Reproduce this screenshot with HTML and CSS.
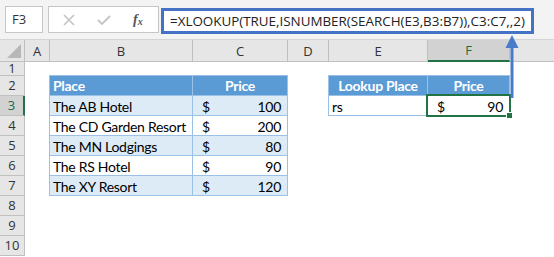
FILE: index.html
```html
<!DOCTYPE html>
<html>
<head>
<meta charset="utf-8">
<link rel="stylesheet" href="styles.css">
</head>
<body>
<div class="app">
  <div class="toolbar">
    <div class="namebox">F3</div>
    <div class="fxbox">
      <svg class="ic" width="14" height="12" viewBox="0 0 14 12"><path d="M2 1 L12 11 M12 1 L2 11" stroke="#c4c4c4" stroke-width="1.6" fill="none"/></svg>
      <svg class="ic" width="14" height="12" viewBox="0 0 14 12"><path d="M1 6 L5 10 L13 2" stroke="#c4c4c4" stroke-width="1.8" fill="none"/></svg>
      <span class="fx">f<sub>x</sub></span>
    </div>
    <div class="formula">=XLOOKUP(TRUE,ISNUMBER(SEARCH(E3,B3:B7)),C3:C7,,2)</div>
  </div>
  <div class="sheet">
    <div class="corner"><span class="tri"></span></div>
    <div class="ch">A</div>
    <div class="ch">B</div>
    <div class="ch">C</div>
    <div class="ch">D</div>
    <div class="ch">E</div>
    <div class="ch sel">F</div>
    <div class="ch last"></div>

    <div class="rh r1">1</div>
    <div class="rh">2</div>
    <div class="rh sel">3</div>
    <div class="rh">4</div>
    <div class="rh">5</div>
    <div class="rh">6</div>
    <div class="rh">7</div>
    <div class="rh">8</div>
    <div class="rh">9</div>
    <div class="rh">10</div>

    <div class="tbl main">
      <div class="th left">Place</div><div class="th">Price</div>
      <div class="td b">The AB Hotel</div><div class="td b num"><span>$</span><span>100</span></div>
      <div class="td">The CD Garden Resort</div><div class="td num"><span>$</span><span>200</span></div>
      <div class="td b">The MN Lodgings</div><div class="td b num"><span>$</span><span>80</span></div>
      <div class="td">The RS Hotel</div><div class="td num"><span>$</span><span>90</span></div>
      <div class="td b">The XY Resort</div><div class="td b num"><span>$</span><span>120</span></div>
    </div>

    <div class="tbl lookup">
      <div class="th">Lookup Place</div><div class="th">Price</div>
      <div class="td w">rs</div><div class="td w num active"><span>$</span><span>90</span><i class="handle"></i></div>
    </div>
  </div>
  <svg class="arrow" width="20" height="70" viewBox="0 0 20 70">
    <path d="M8.5 12 V63 H11.5 V12 Z" fill="#4a7bcb"/>
    <path d="M10 0 L16.5 13 L3.5 13 Z" fill="#4a7bcb"/>
  </svg>
</div>
</body>
</html>
```

FILE: styles.css
```css
* { box-sizing: border-box; }
html, body { margin: 0; padding: 0; background: #fff; }
.app { position: relative; width: 554px; height: 257px; overflow: hidden; font-family: "Open Sans", "Noto Sans", sans-serif; }

.toolbar { height: 40px; background: #f3f3f3; display: flex; align-items: flex-start; padding-top: 6px; padding-left: 5px; border-bottom: 1px solid #d4d4d4; }
.namebox { width: 38px; height: 27px; background: #fff; border: 1px solid #c6c6c6; font-size: 13px; color: #333; padding-left: 6px; line-height: 25px; }
.fxbox { margin-left: 5px; width: 111px; height: 27px; background: #fff; border: 1px solid #c6c6c6; display: flex; align-items: center; padding-left: 13px; }
.fxbox .ic { margin-right: 21px; }
.fxbox .ic + .ic { margin-right: 22px; }
.fx { font-family: "Liberation Serif", serif; font-style: italic; font-size: 14px; color: #555; font-weight: bold; }
.fx sub { font-size: 10px; vertical-align: -1px; }
.formula { margin-left: 2px; margin-top: 2px; width: 373px; height: 26px; background: #fff; border: 3px solid #4472c4; font-size: 13.4px; line-height: 20px; color: #222; padding-left: 6px; white-space: nowrap; overflow: hidden; }

.sheet { display: grid; grid-template-columns: 25px 25px 143px 95px 41px 99px 82px 1fr; grid-template-rows: 22px 14px repeat(9, 20px) 1fr; height: 217px; }
.corner { grid-row: 1; grid-column: 1; background: #e6e6e6; border-right: 1px solid #c0c0c0; border-bottom: 1px solid #c0c0c0; position: relative; }
.tri { position: absolute; right: 3px; bottom: 3px; width: 0; height: 0; border-left: 14px solid transparent; border-bottom: 14px solid #b7b7b7; }
.ch { grid-row: 1; background: #e6e6e6; border-right: 1px solid #c0c0c0; border-bottom: 1px solid #c0c0c0; font-size: 13px; color: #333; display: flex; align-items: center; justify-content: center; }
.ch.last { border-right: none; }
.ch.sel { background: #d2d2d2; color: #1e6b3d; border-bottom: 2px solid #217346; }
.rh { grid-column: 1; background: #e6e6e6; border-right: 1px solid #c0c0c0; border-bottom: 1px solid #c0c0c0; font-size: 13px; color: #333; display: flex; align-items: center; justify-content: center; line-height: 1; }
.rh.r1 { grid-row: 2; }
.rh.sel { background: #d2d2d2; color: #1e6b3d; border-right: 2px solid #217346; }

.tbl { display: grid; background: #9bc2e6; gap: 1px; padding: 1px; font-family: "Lato", "Open Sans", sans-serif; font-size: 14px; letter-spacing: -0.3px; color: #000; margin-left: -1px; margin-top: -1px; }
.tbl.main { grid-row: 3 / span 6; grid-column: 3 / span 2; grid-template-columns: 142px 94px; grid-template-rows: repeat(6, 19px); }
.tbl.lookup { grid-row: 3 / span 2; grid-column: 6 / span 2; grid-template-columns: 98px 81px; grid-template-rows: repeat(2, 19px); }
.th { background: #5b9bd5; color: #fff; font-weight: bold; display: flex; align-items: center; justify-content: center; }
.th.left { justify-content: flex-start; padding-left: 3px; }
.td { background: #fff; display: flex; align-items: center; padding-left: 3px; padding-top: 1px; white-space: nowrap; }
.td.b { background: #ddebf7; }
.num { justify-content: space-between; padding-left: 9px; padding-right: 6px; }
.lookup .td { padding-left: 3px; }
.lookup .num { padding-left: 9px; padding-right: 6px; }
.active { position: relative; outline: 2px solid #217346; outline-offset: 0; }
.handle { position: absolute; right: -4px; bottom: -4px; width: 5px; height: 5px; background: #217346; border: 1px solid #fff; box-sizing: content-box; }

.arrow { position: absolute; left: 502px; top: 35px; }
```
